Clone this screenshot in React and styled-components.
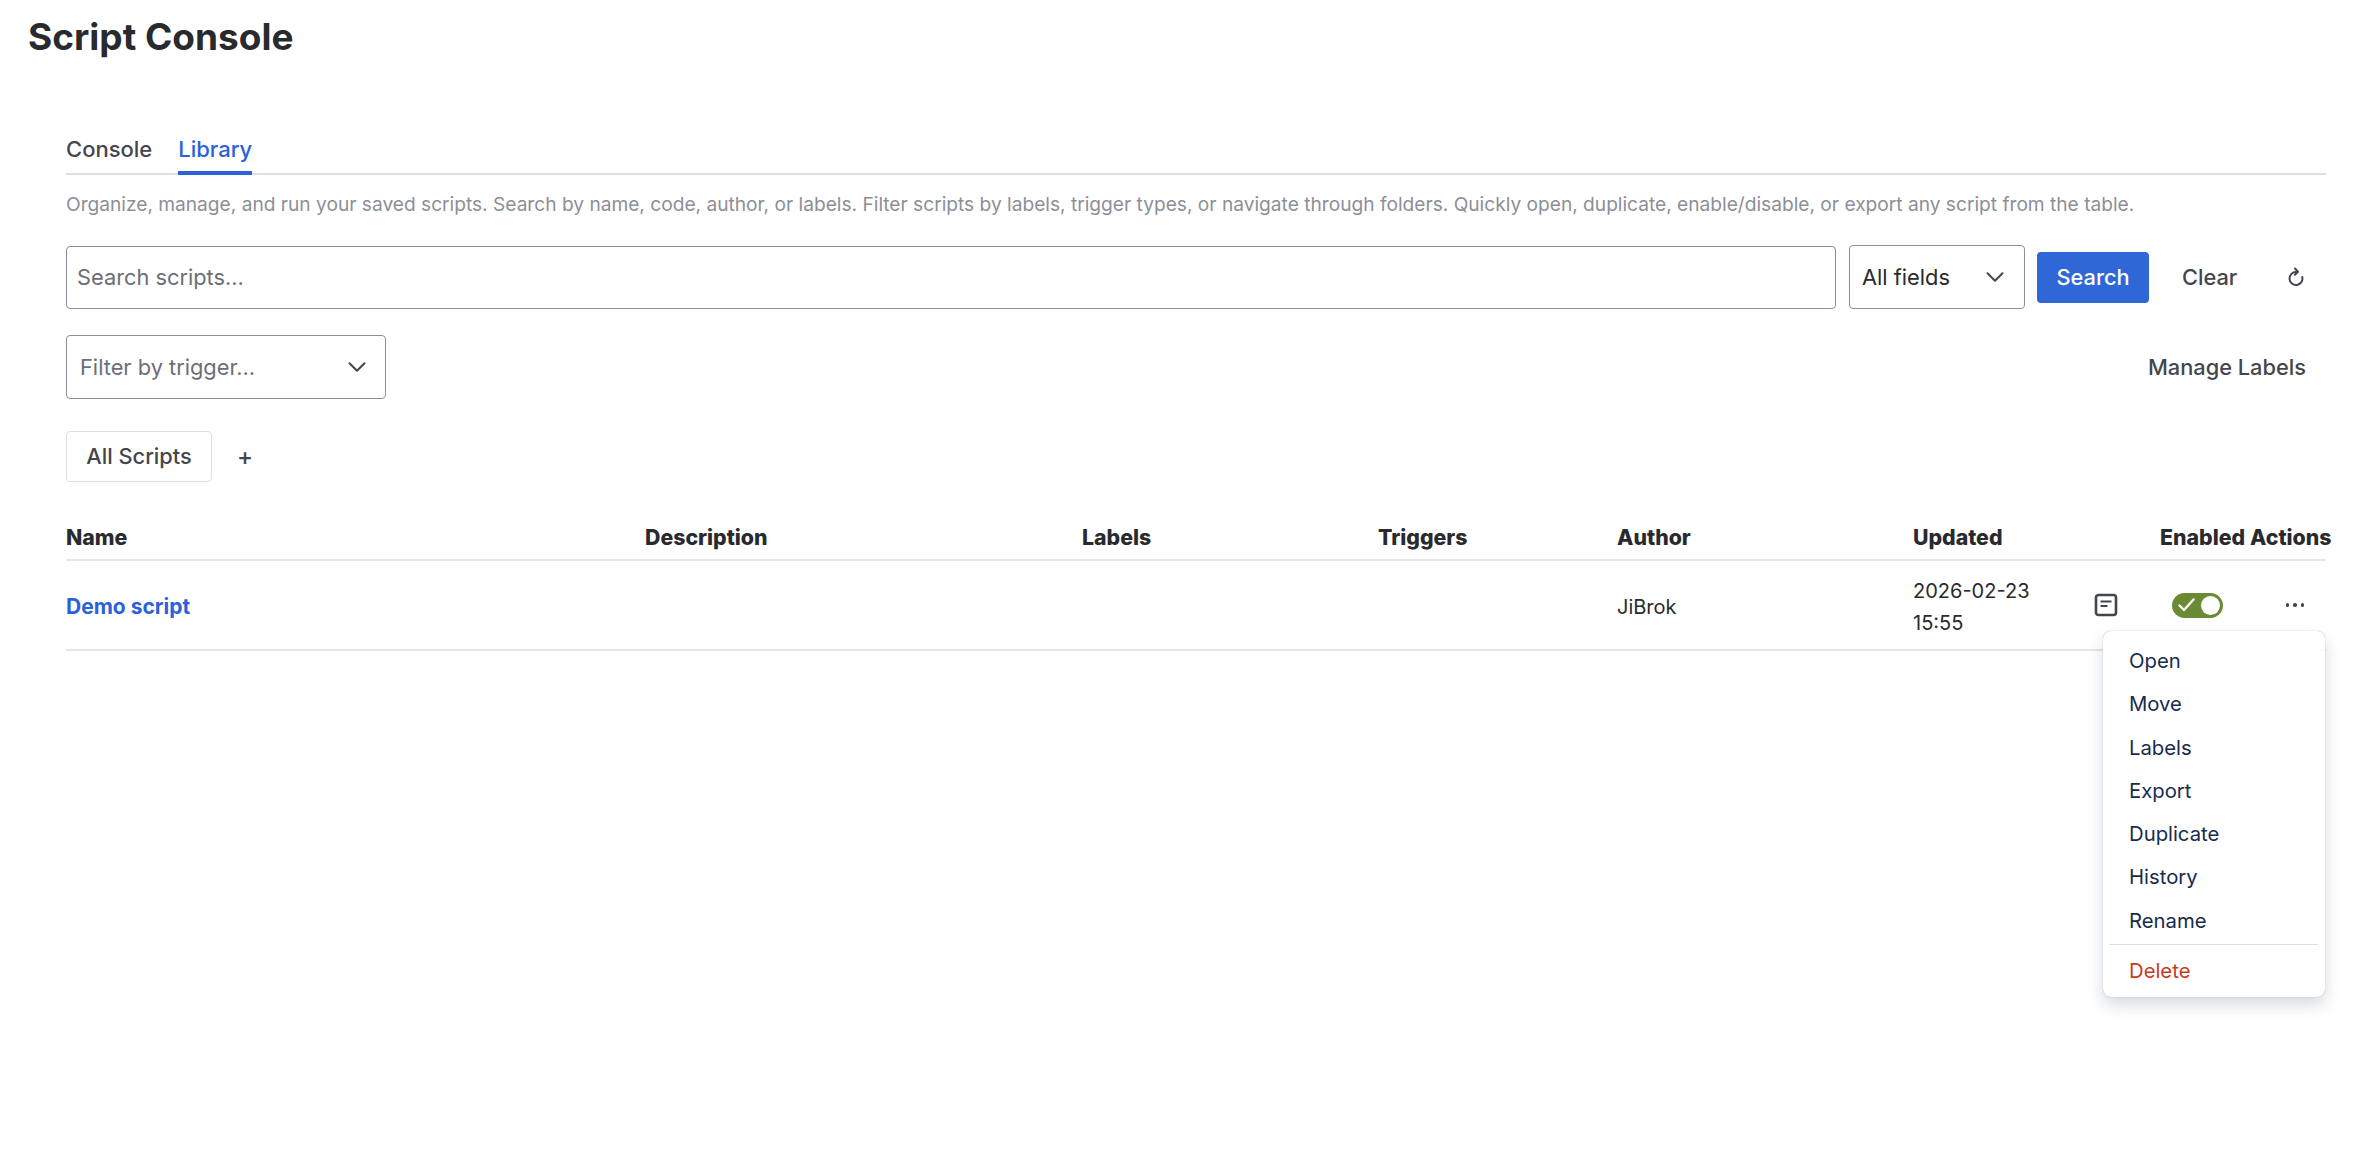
import React from 'react';
import styled, { createGlobalStyle } from 'styled-components';
import { ChevronDown } from 'lucide-react';

const GlobalStyle = createGlobalStyle`
  html, body {
    margin: 0;
    padding: 0;
    background: #fff;
    font-family: Inter, "Liberation Sans", sans-serif;
    color: #292a2e;
  }
  * {
    box-sizing: border-box;
  }
`;

const Page = styled.div`
  width: 2372px;
  height: 1154px;
  overflow: hidden;
`;

const Title = styled.h1`
  margin: 0;
  padding: 15px 0 0 28px;
  height: 124px;
  font-size: 37px;
  line-height: 44px;
  font-weight: 700;
  color: #292a2e;
`;

const Content = styled.div`
  margin: 0 46px 0 66px;
`;

const Tabs = styled.div`
  display: flex;
  gap: 26px;
  height: 51px;
  border-bottom: 2px solid #dcdfe4;
`;

const Tab = styled.div`
  height: 51px;
  font-size: 22px;
  line-height: 30px;
  padding-top: 10px;
  font-weight: 500;
  color: ${(p) => (p.$active ? '#2b62d9' : '#44464d')};
  border-bottom: ${(p) => (p.$active ? '4px solid #2b62d9' : 'none')};
`;

const Intro = styled.p`
  margin: 0;
  padding-top: 17px;
  height: 70px;
  font-size: 19.15px;
  line-height: 24px;
  color: #8c8f97;
  white-space: nowrap;
`;

const SearchRow = styled.div`
  display: flex;
  align-items: center;
  height: 64px;
`;

const SearchInput = styled.input`
  width: 1770px;
  height: 63px;
  border: 1.5px solid #8c8f97;
  border-radius: 4px;
  padding: 0 10px;
  font: 400 21.8px Inter, sans-serif;
  color: #292a2e;
  outline: none;

  &::placeholder {
    color: #6b6e76;
    opacity: 1;
  }
`;

const SelectBox = styled.div`
  display: flex;
  align-items: center;
  justify-content: space-between;
  width: ${(p) => p.$width}px;
  height: 64px;
  margin-left: ${(p) => p.$left || 0}px;
  padding: 0 ${(p) => p.$padRight}px 0 ${(p) => p.$pad}px;
  border: 1.5px solid #8c8f97;
  border-radius: 4px;
  font-size: 21.8px;
  color: ${(p) => (p.$placeholder ? '#6b6e76' : '#292a2e')};
`;

const SearchButton = styled.button`
  width: 112px;
  height: 51px;
  margin-left: 12px;
  border: none;
  border-radius: 4px;
  background: #2f67d6;
  color: #fff;
  font: 500 21.8px Inter, sans-serif;
`;

const GhostButton = styled.div`
  font-size: 21.8px;
  font-weight: 500;
  color: #44464d;
  margin-left: ${(p) => p.$left || 0}px;
`;

const IconSlot = styled.div`
  display: flex;
  align-items: center;
  justify-content: center;
  width: 24px;
  height: 24px;
  margin-left: 47px;
  color: #44464d;
`;

const FilterRow = styled.div`
  display: flex;
  align-items: center;
  justify-content: space-between;
  margin-top: 26px;
  padding-right: 20px;
`;

const FolderRow = styled.div`
  display: flex;
  align-items: center;
  margin-top: 32px;
`;

const FolderChip = styled.div`
  display: flex;
  align-items: center;
  justify-content: center;
  width: 146px;
  height: 51px;
  padding-bottom: 2px;
  border: 1.5px solid #dcdfe4;
  border-radius: 4px;
  font-size: 21.8px;
  font-weight: 500;
  color: #44464d;
`;

const AddFolder = styled.div`
  margin-left: 25px;
  font-size: 24px;
  font-weight: 500;
  color: #44464d;
`;

const Columns = '579px 437px 296px 239px 296px 172px 75px 90px 75px';

const HeadRow = styled.div`
  display: grid;
  grid-template-columns: ${Columns};
  align-items: center;
  margin-top: 32px;
  height: 47px;
  padding-top: 1px;
  border-bottom: 2px solid #e4e6ea;
  white-space: nowrap;
`;

const HeadCell = styled.div`
  font-size: 21.3px;
  font-weight: 800;
  color: #292a2e;
`;

const BodyRow = styled.div`
  position: relative;
  display: grid;
  grid-template-columns: ${Columns};
  align-items: center;
  height: 90px;
  border-bottom: 2px solid #e4e6ea;
`;

const Cell = styled.div`
  padding-top: 4px;
  font-size: 20px;
  line-height: 32px;
  color: #292a2e;
`;

const NameLink = styled.a`
  font-size: 21px;
  font-weight: 700;
  color: #2b62d9;
`;

const NoteSlot = styled.div`
  display: flex;
  align-items: center;
  margin-left: 9px;
`;

const Toggle = styled.div`
  position: relative;
  display: flex;
  align-items: center;
  width: 51px;
  height: 25px;
  margin-left: 12px;
  padding-left: 6px;
  border-radius: 13px;
  background: #6a8a34;
`;

const ToggleKnob = styled.span`
  position: absolute;
  top: 3px;
  right: 3px;
  width: 19px;
  height: 19px;
  border-radius: 50%;
  background: #fff;
`;

const MoreDots = styled.div`
  display: flex;
  justify-content: center;
  align-items: center;
  gap: 4px;
  width: 18px;
  margin-left: 36px;
`;

const Dot = styled.span`
  width: 3.5px;
  height: 3.5px;
  border-radius: 50%;
  background: #44464d;
`;

const Menu = styled.div`
  position: absolute;
  top: 70px;
  right: 1px;
  z-index: 2;
  width: 222px;
  height: 366px;
  padding-top: 8px;
  background: #fff;
  border-radius: 8px;
  box-shadow: 0 0 1px rgba(9, 30, 66, 0.4), 0 8px 16px rgba(9, 30, 66, 0.16);
`;

const MenuItem = styled.div`
  height: 43.25px;
  padding-left: 26px;
  font-size: 20.3px;
  line-height: 43px;
  color: ${(p) => (p.$danger ? '#c93a1e' : '#172b4d')};
`;

const MenuDivider = styled.div`
  height: 1px;
  margin: 2px 7px 4px 6px;
  background: #dcdfe4;
`;

const RefreshIcon = () => (
  <svg width="18" height="20" viewBox="0 0 18 20" fill="none" stroke="currentColor" strokeWidth="2" strokeLinecap="round" strokeLinejoin="round">
    <path d="M9 5A6.5 6.5 0 1 0 15.3 10" />
    <path d="M8 1.5 11 4.7 8 7.8" />
  </svg>
);

const NoteIcon = () => (
  <svg width="24" height="24" viewBox="0 0 24 24" fill="none" stroke="#44464d" strokeWidth="2.6">
    <rect x="2" y="2" width="20" height="20" rx="2.5" />
    <path d="M6.5 8.5h11M6.5 13h7" strokeWidth="2.2" />
  </svg>
);

const CheckIcon = () => (
  <svg width="17" height="14" viewBox="0 0 17 14" fill="none" stroke="#fff" strokeWidth="2.4" strokeLinecap="round" strokeLinejoin="round">
    <path d="M1.5 7.5 6 12 15.5 1.5" />
  </svg>
);

const menuItems = ['Open', 'Move', 'Labels', 'Export', 'Duplicate', 'History', 'Rename'];

export default function App() {
  return (
    <Page>
      <GlobalStyle />
      <Title>Script Console</Title>
      <Content>
        <Tabs>
          <Tab>Console</Tab>
          <Tab $active>Library</Tab>
        </Tabs>
        <Intro>
          Organize, manage, and run your saved scripts. Search by name, code, author, or labels. Filter scripts by labels, trigger types, or navigate through folders. Quickly open, duplicate, enable/disable, or export any script from the table.
        </Intro>
        <SearchRow>
          <SearchInput placeholder="Search scripts..." />
          <SelectBox $width={176} $left={13} $pad={12} $padRight={14}>
            All fields
            <ChevronDown size={30} strokeWidth={1.6} color="#44464d" />
          </SelectBox>
          <SearchButton>Search</SearchButton>
          <GhostButton $left={33}>Clear</GhostButton>
          <IconSlot>
            <RefreshIcon />
          </IconSlot>
        </SearchRow>
        <FilterRow>
          <SelectBox $width={320} $pad={13} $padRight={13} $placeholder>
            Filter by trigger...
            <ChevronDown size={30} strokeWidth={1.6} color="#44464d" />
          </SelectBox>
          <GhostButton>Manage Labels</GhostButton>
        </FilterRow>
        <FolderRow>
          <FolderChip>All Scripts</FolderChip>
          <AddFolder>+</AddFolder>
        </FolderRow>
        <HeadRow>
          <HeadCell>Name</HeadCell>
          <HeadCell>Description</HeadCell>
          <HeadCell>Labels</HeadCell>
          <HeadCell>Triggers</HeadCell>
          <HeadCell>Author</HeadCell>
          <HeadCell>Updated</HeadCell>
          <HeadCell />
          <HeadCell>Enabled</HeadCell>
          <HeadCell>Actions</HeadCell>
        </HeadRow>
        <BodyRow>
          <Cell>
            <NameLink>Demo script</NameLink>
          </Cell>
          <Cell />
          <Cell />
          <Cell />
          <Cell>JiBrok</Cell>
          <Cell>
            2026-02-23
            <br />
            15:55
          </Cell>
          <NoteSlot>
            <NoteIcon />
          </NoteSlot>
          <Toggle>
            <CheckIcon />
            <ToggleKnob />
          </Toggle>
          <MoreDots>
            <Dot />
            <Dot />
            <Dot />
          </MoreDots>
          <Menu>
            {menuItems.map((item) => (
              <MenuItem key={item}>{item}</MenuItem>
            ))}
            <MenuDivider />
            <MenuItem $danger>Delete</MenuItem>
          </Menu>
        </BodyRow>
      </Content>
    </Page>
  );
}
